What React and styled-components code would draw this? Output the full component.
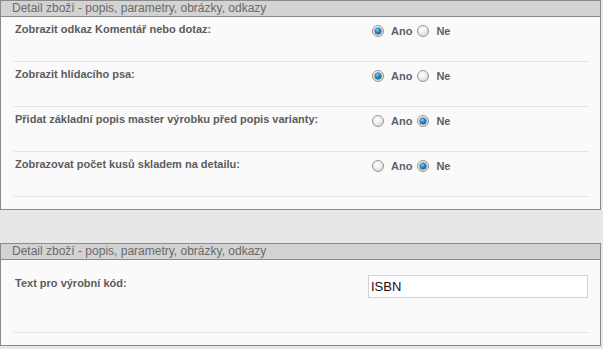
import React from 'react'
import styled, { createGlobalStyle } from 'styled-components'

const GlobalStyle = createGlobalStyle`
  html, body {
    margin: 0;
    padding: 0;
    background: #e7e7e7;
    font-family: "Liberation Sans", Arial, sans-serif;
  }
`

const sections = [
  {
    title: 'Detail zboží - popis, parametry, obrázky, odkazy',
    fields: [
      { label: 'Zobrazit odkaz Komentář nebo dotaz:', type: 'radio', value: 'ano' },
      { label: 'Zobrazit hlídacího psa:', type: 'radio', value: 'ano' },
      { label: 'Přidat základní popis master výrobku před popis varianty:', type: 'radio', value: 'ne' },
      { label: 'Zobrazovat počet kusů skladem na detailu:', type: 'radio', value: 'ne' },
    ],
  },
  {
    title: 'Detail zboží - popis, parametry, obrázky, odkazy',
    fields: [
      { label: 'Text pro výrobní kód:', type: 'text', value: 'ISBN' },
    ],
  },
]

export default function App() {
  return (
    <>
      <GlobalStyle />
      <Page>
        {sections.map((section, i) => (
          <Panel key={i}>
            <PanelHeader>{section.title}</PanelHeader>
            <PanelBody>
              {section.fields.map(field => (
                <FieldRow key={field.label} tall={field.type === 'text'}>
                  <Label>{field.label}</Label>
                  {field.type === 'radio' ? (
                    <RadioGroup>
                      <RadioOption>
                        <Radio checked={field.value === 'ano'} />
                        <OptionText>Ano</OptionText>
                      </RadioOption>
                      <RadioOption>
                        <Radio checked={field.value === 'ne'} />
                        <OptionText>Ne</OptionText>
                      </RadioOption>
                    </RadioGroup>
                  ) : (
                    <TextInput defaultValue={field.value} />
                  )}
                </FieldRow>
              ))}
            </PanelBody>
          </Panel>
        ))}
      </Page>
    </>
  )
}

const Page = styled.div`
  width: 601px;
  display: flex;
  flex-direction: column;
  gap: 33px;
`
const Panel = styled.section`
  border: 1px solid #8a8a8a;
  background: #fafafa;
`
const PanelHeader = styled.div`
  height: 15px;
  line-height: 15px;
  padding-left: 11px;
  background: #d3d3d3;
  border-bottom: 1px solid #8a8a8a;
  color: #6a6a6a;
  font-size: 12px;
  white-space: nowrap;
`
const PanelBody = styled.div`
  padding: 0 11px 12px 13px;
`
const FieldRow = styled.div`
  display: grid;
  grid-template-columns: 354px 1fr;
  align-items: start;
  height: ${props => (props.tall ? '73px' : '45px')};
  padding-top: ${props => (props.tall ? '16px' : '5px')};
  box-sizing: border-box;
  border-bottom: 1px solid #e3e3e3;
`
const Label = styled.div`
  padding-left: 1px;
  font-size: 11px;
  line-height: 14px;
  font-weight: bold;
  color: #5c5c5c;
`
const RadioGroup = styled.div`
  display: flex;
  align-items: center;
  gap: 5px;
  padding: 2px 0 0 4px;
`
const RadioOption = styled.label`
  display: flex;
  align-items: center;
  gap: 7px;
`
const Radio = styled.span`
  position: relative;
  width: 12px;
  height: 12px;
  box-sizing: border-box;
  border-radius: 50%;
  border: 1px solid #969696;
  background: radial-gradient(circle at 40% 35%, #ffffff 0%, #eeeeee 45%, #c9c9c9 100%);
  &::after {
    content: '';
    display: ${props => (props.checked ? 'block' : 'none')};
    position: absolute;
    left: 2px;
    top: 2px;
    width: 6px;
    height: 6px;
    border-radius: 50%;
    background: radial-gradient(circle at 40% 35%, #7fd0ff 0%, #1a86c8 45%, #063c66 100%);
    box-shadow: 0 0 0 0.5px #1d2f3e;
  }
`
const OptionText = styled.span`
  font-size: 11px;
  line-height: 14px;
  font-weight: bold;
  color: #5d606c;
`
const TextInput = styled.input`
  width: 220px;
  height: 23px;
  box-sizing: border-box;
  margin-top: -1px;
  padding: 0 2px;
  border: 1px solid #d2d2d8;
  background: #fff;
  font-family: "Liberation Sans", Arial, sans-serif;
  font-size: 13px;
  color: #1a0a14;
  outline: none;
`
